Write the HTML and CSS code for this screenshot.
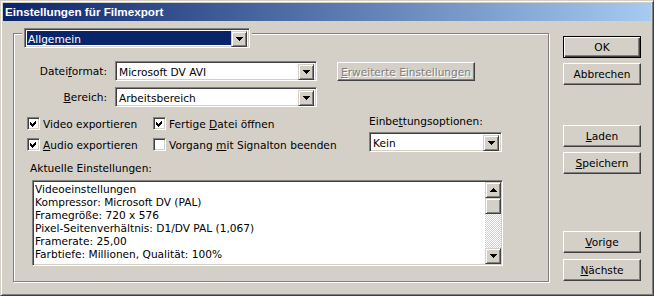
FILE: index.html
```html
<!DOCTYPE html>
<html lang="de">
<head>
    <meta charset="UTF-8">
    <title>Einstellungen für Filmexport</title>
    <link rel="stylesheet" href="styles.css">
</head>
<body>
    <div class="window">
        <div class="titlebar">Einstellungen für Filmexport</div>

        <div class="content">
            <!-- Gruppe Allgemein -->
            <div class="group">
                <div class="group-head">
                    <div class="combo combo-head">
                        <span class="combo-field selected">Allgemein</span>
                        <span class="combo-btn"><svg width="7" height="4" viewBox="0 0 7 4" shape-rendering="crispEdges"><path d="M0 0h7v1h-1v1h-1v1h-1v1h-1v-1h-1v-1h-1v-1h-1z"/></svg></span>
                    </div>
                </div>

                <div class="form-row row-format">
                    <span class="form-label">Datei<u>f</u>ormat:</span>
                    <div class="combo combo-wide">
                        <span class="combo-field">Microsoft DV AVI</span>
                        <span class="combo-btn"><svg width="7" height="4" viewBox="0 0 7 4" shape-rendering="crispEdges"><path d="M0 0h7v1h-1v1h-1v1h-1v1h-1v-1h-1v-1h-1v-1h-1z"/></svg></span>
                    </div>
                    <button class="btn btn-disabled"><u>E</u>rweiterte Einstellungen</button>
                </div>

                <div class="form-row row-range">
                    <span class="form-label"><u>B</u>ereich:</span>
                    <div class="combo combo-wide">
                        <span class="combo-field">Arbeitsbereich</span>
                        <span class="combo-btn"><svg width="7" height="4" viewBox="0 0 7 4" shape-rendering="crispEdges"><path d="M0 0h7v1h-1v1h-1v1h-1v1h-1v-1h-1v-1h-1v-1h-1z"/></svg></span>
                    </div>
                </div>

                <div class="options">
                    <div class="checks">
                        <div class="check-row">
                            <label class="check check-col1"><span class="box"><svg width="9" height="9" viewBox="0 0 9 9" shape-rendering="crispEdges"><path d="M1 3L3 5L7 1V4L3 8L1 6Z"/></svg></span><span>Video exportieren</span></label>
                            <label class="check"><span class="box"><svg width="9" height="9" viewBox="0 0 9 9" shape-rendering="crispEdges"><path d="M1 3L3 5L7 1V4L3 8L1 6Z"/></svg></span><span>Fertige <u>D</u>atei öffnen</span></label>
                        </div>
                        <div class="check-row">
                            <label class="check check-col1"><span class="box"><svg width="9" height="9" viewBox="0 0 9 9" shape-rendering="crispEdges"><path d="M1 3L3 5L7 1V4L3 8L1 6Z"/></svg></span><span><u>A</u>udio exportieren</span></label>
                            <label class="check"><span class="box"></span><span>Vorgang <u>m</u>it Signalton beenden</span></label>
                        </div>
                    </div>
                    <div class="embed">
                        <div class="embed-label">Einbe<u>t</u>tungsoptionen:</div>
                        <div class="combo combo-embed">
                            <span class="combo-field">Kein</span>
                            <span class="combo-btn"><svg width="7" height="4" viewBox="0 0 7 4" shape-rendering="crispEdges"><path d="M0 0h7v1h-1v1h-1v1h-1v1h-1v-1h-1v-1h-1v-1h-1z"/></svg></span>
                        </div>
                    </div>
                </div>

                <div class="current-label">Aktuelle Einstellungen:</div>
                <div class="listbox">
                    <div class="list-text">
                        <div>Videoeinstellungen</div>
                        <div>Kompressor: Microsoft DV (PAL)</div>
                        <div>Framegröße: 720 x 576</div>
                        <div>Pixel-Seitenverhältnis: D1/DV PAL (1,067)</div>
                        <div>Framerate: 25,00</div>
                        <div>Farbtiefe: Millionen, Qualität: 100%</div>
                    </div>
                    <div class="scrollbar">
                        <span class="scroll-btn"><svg width="7" height="4" viewBox="0 0 7 4" shape-rendering="crispEdges"><path d="M3 0h1v1h1v1h1v1h1v1h-7v-1h1v-1h1v-1h1z"/></svg></span>
                        <span class="scroll-thumb"></span>
                        <span class="scroll-track"></span>
                        <span class="scroll-btn"><svg width="7" height="4" viewBox="0 0 7 4" shape-rendering="crispEdges"><path d="M0 0h7v1h-1v1h-1v1h-1v1h-1v-1h-1v-1h-1v-1h-1z"/></svg></span>
                    </div>
                </div>
            </div>

            <!-- Schaltflächen -->
            <div class="buttons">
                <button class="btn btn-default btn-ok">OK</button>
                <button class="btn btn-cancel">Abbrechen</button>
                <button class="btn btn-load"><u>L</u>aden</button>
                <button class="btn btn-save"><u>S</u>peichern</button>
                <button class="btn btn-prev"><u>V</u>orige</button>
                <button class="btn btn-next"><u>N</u>ächste</button>
            </div>
        </div>
    </div>
</body>
</html>
```

FILE: styles.css
```css
:root {
    --face: #d4d0c8;
    --shadow: #808080;
    --dark: #404040;
    --light: #ffffff;
    --select: #0a246a;
}

* {
    box-sizing: border-box;
}

body {
    margin: 0;
    background: var(--face);
    font-family: "DejaVu Sans", sans-serif;
    font-size: 10.6px;
    color: #000;
}

u {
    text-decoration: underline;
    text-underline-offset: 1px;
}

/* Fenster */
.window {
    width: 654px;
    height: 296px;
    background: var(--face);
    border: 1px solid;
    border-color: var(--face) var(--dark) var(--dark) var(--face);
    box-shadow: inset 1px 1px var(--light), inset -1px -1px var(--shadow);
    padding: 2px;
    display: flex;
    flex-direction: column;
}

.titlebar {
    height: 18px;
    line-height: 18px;
    padding-left: 2px;
    background: linear-gradient(90deg, #0a246a 0%, #a6caf0 100%);
    color: #fff;
    font-family: "Liberation Sans", sans-serif;
    font-weight: bold;
    font-size: 11.7px;
    white-space: nowrap;
}

.content {
    display: flex;
    gap: 14px;
    padding: 12px 10px 0 10px;
}

/* Gruppenrahmen */
.group {
    width: 536px;
    height: 249px;
    border: 1px solid var(--shadow);
    box-shadow: inset 1px 1px var(--light), 1px 1px var(--light);
    padding-left: 13px;
}

.group-head {
    width: max-content;
    margin: -6px 0 0 -5px;
    padding: 0 2px;
    background: var(--face);
}

/* Kombinationsfelder */
.combo {
    display: flex;
    height: 20px;
    border: 1px solid;
    border-color: var(--shadow) var(--light) var(--light) var(--shadow);
    box-shadow: inset 1px 1px var(--dark), inset -1px -1px var(--face);
    background: #fff;
    padding: 2px;
}

.combo-field {
    flex: 1;
    line-height: 16px;
    padding-left: 1px;
    white-space: nowrap;
}

.combo-field.selected {
    background: var(--select);
    color: #fff;
}

.combo-btn,
.scroll-btn {
    width: 16px;
    height: 16px;
    display: flex;
    align-items: center;
    justify-content: center;
    background: var(--face);
    border: 1px solid;
    border-color: var(--face) var(--dark) var(--dark) var(--face);
    box-shadow: inset 1px 1px var(--light), inset -1px -1px var(--shadow);
}

.combo-head {
    width: 226px;
}

.combo-wide {
    width: 202px;
}

.combo-embed {
    width: 133px;
}

/* Formularzeilen */
.form-row {
    display: flex;
    align-items: center;
    height: 20px;
}

.row-format {
    margin-top: 13px;
}

.row-range {
    margin-top: 6px;
}

.form-label {
    width: 80px;
    margin-right: 8px;
    text-align: right;
    white-space: nowrap;
}

/* Schaltflächen */
.btn {
    font: inherit;
    color: #000;
    height: 22px;
    padding: 0;
    background: var(--face);
    border: 1px solid;
    border-color: var(--light) var(--dark) var(--dark) var(--light);
    box-shadow: inset -1px -1px var(--shadow);
    white-space: nowrap;
}

.btn-disabled {
    width: 138px;
    height: 19px;
    margin-left: 20px;
    color: var(--shadow);
    text-shadow: 1px 1px var(--light);
    align-self: flex-start;
    margin-top: 1px;
}

.btn-default {
    border-color: #000;
    box-shadow: inset 1px 1px var(--light), inset -1px -1px var(--dark), inset -2px -2px var(--shadow);
}

.buttons {
    width: 78px;
    display: flex;
    flex-direction: column;
}

.btn-ok { margin-top: 3px; }
.btn-cancel { margin-top: 5px; }
.btn-load { margin-top: 40px; }
.btn-save { margin-top: 5px; }
.btn-prev { margin-top: 57px; }
.btn-next { margin-top: 6px; }

/* Optionen */
.options {
    display: flex;
    margin-top: 6px;
}

.checks {
    width: 342px;
}

.check-row {
    display: flex;
    height: 21px;
    align-items: center;
}

.check {
    display: flex;
    align-items: center;
    white-space: nowrap;
}

.check-col1 {
    width: 126px;
}

.box {
    width: 13px;
    height: 13px;
    margin-right: 3px;
    padding: 1px;
    display: flex;
    align-items: center;
    justify-content: center;
    background: #fff;
    border: 1px solid;
    border-color: var(--shadow) var(--light) var(--light) var(--shadow);
    box-shadow: inset 1px 1px var(--dark), inset -1px -1px var(--face);
}

.embed {
    padding-top: 2px;
}

.embed-label {
    line-height: 13px;
    margin-bottom: 4px;
    white-space: nowrap;
}

/* Aktuelle Einstellungen */
.current-label {
    margin: 7px 0 0 3px;
    line-height: 13px;
}

.listbox {
    display: flex;
    width: 471px;
    height: 86px;
    margin: 5px 0 0 5px;
    background: #fff;
    border: 1px solid;
    border-color: var(--shadow) var(--light) var(--light) var(--shadow);
    box-shadow: inset 1px 1px var(--dark), inset -1px -1px var(--face);
    padding: 1px;
}

.list-text {
    flex: 1;
    padding: 1px 1px;
    line-height: 13px;
    white-space: nowrap;
    overflow: hidden;
}

.scrollbar {
    width: 16px;
    display: flex;
    flex-direction: column;
}

.scroll-thumb {
    height: 16px;
    background: var(--face);
    border: 1px solid;
    border-color: var(--face) var(--dark) var(--dark) var(--face);
    box-shadow: inset 1px 1px var(--light), inset -1px -1px var(--shadow);
}

.scroll-track {
    flex: 1;
    background: repeating-conic-gradient(#fff 0 25%, var(--face) 0 50%) 0 0 / 2px 2px;
}
```
